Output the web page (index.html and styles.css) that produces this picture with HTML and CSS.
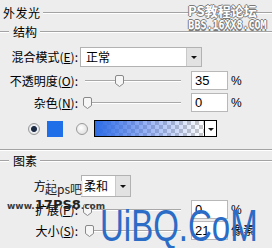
FILE: index.html
```html
<!DOCTYPE html>
<html lang="zh-CN">
<head>
  <meta charset="UTF-8" />
  <meta name="viewport" content="width=device-width, initial-scale=1.0" />
  <title>外发光</title>
  <link rel="stylesheet" href="styles.css">
</head>
<body>
  <div class="legend top"><span>外发光</span></div>
  <div class="legend sub"><span>结构</span></div>

  <div class="row r1">
    <span class="lbl">混合模式(<u>E</u>):</span>
    <div class="select blend"><span>正常</span><i class="drop"></i></div>
  </div>

  <div class="row r2">
    <span class="lbl">不透明度(<u>O</u>):</span>
    <div class="slider"><div class="rail"><i class="thumb" style="left:35%"></i></div></div>
    <div class="num">35</div>
    <span class="unit">%</span>
  </div>

  <div class="row r3">
    <span class="lbl">杂色(<u>N</u>):</span>
    <div class="slider"><div class="rail"><i class="thumb" style="left:0%"></i></div></div>
    <div class="num">0</div>
    <span class="unit">%</span>
  </div>

  <div class="row r4">
    <i class="radio on"></i>
    <i class="swatch"></i>
    <i class="radio"></i>
    <div class="gradient"></div>
    <i class="grad-drop"></i>
  </div>

  <div class="sep"></div>
  <div class="legend sub s2"><span>图素</span></div>

  <div class="row r5">
    <span class="lbl">方法(<u>Q</u>):</span>
    <div class="select method"><span>柔和</span><i class="drop"></i></div>
  </div>

  <div class="row r6">
    <span class="lbl">扩展(<u>P</u>):</span>
    <div class="slider"><div class="rail"><i class="thumb" style="left:0%"></i></div></div>
    <div class="num">0</div>
    <span class="unit">%</span>
  </div>

  <div class="row r7">
    <span class="lbl">大小(<u>S</u>):</span>
    <div class="slider"><div class="rail"><i class="thumb" style="left:2%"></i></div></div>
    <div class="num">21</div>
    <span class="unit">像素</span>
  </div>

  <!-- watermarks -->
  <div class="wm-ps">
    <div class="wm-ps-title">PS教程论坛</div>
    <div class="wm-ps-url">BBS.16XX8.COM</div>
  </div>
  <div class="wm-qi">起ps吧</div>
  <div class="wm-17">www.<b>17PS8</b>.com</div>
  <div class="wm-uibq">UiBQ.CoM</div>
</body>
</html>
```

FILE: styles.css
```css
body {
  margin: 0;
  width: 272px;
  height: 248px;
  overflow: hidden;
  position: relative;
  background-color: #ededed;
  font-family: "Noto Sans CJK SC", sans-serif;
  font-size: 12px;
  line-height: 14px;
  color: #000;
}

u {
  text-decoration: underline;
  text-underline-offset: 1px;
}

/* group titles with etched lines */
.legend {
  display: flex;
  align-items: center;
}

.legend::after {
  content: "";
  flex: 1;
  border-top: 1px solid #a3a3a3;
  border-bottom: 1px solid #fff;
}

.legend.top {
  height: 25px;
  padding-left: 3px;
}

.legend.top span {
  margin-right: 2px;
  letter-spacing: 0.5px;
}

.legend.sub {
  height: 14px;
}

.legend.sub::before {
  content: "";
  width: 9px;
  border-top: 1px solid #a3a3a3;
  border-bottom: 1px solid #fff;
  margin-right: 4px;
}

.legend.sub span {
  margin-right: 3px;
}

.legend.s2 {
  margin-top: 3px;
}

.sep {
  margin-top: 12px;
  border-top: 1px solid #a3a3a3;
  border-bottom: 1px solid #fff;
}

/* control rows */
.row {
  display: flex;
  align-items: center;
}

.lbl {
  width: 78px;
  flex: none;
  text-align: right;
  white-space: nowrap;
}

.r1 { margin-top: 8px; height: 20px; }
.r2 { margin-top: 4px; height: 19px; }
.r3 { margin-top: 3px; height: 19px; }
.r4 { margin-top: 8px; height: 17px; }
.r5 { margin-top: 7px; height: 22px; }
.r6 { margin-top: 3px; height: 19px; }
.r7 { margin-top: 2px; height: 19px; }

/* dropdowns */
.select {
  display: flex;
  align-self: stretch;
  box-sizing: border-box;
  border: 1px solid #b2b2b2;
  background-color: #fff;
}

.select span {
  flex: 1;
  display: flex;
  align-items: center;
  padding-left: 5px;
}

.select .drop {
  width: 14px;
  background-color: #e2e2e2;
  border-left: 1px solid #c9c9c9;
  position: relative;
}

.select .drop::after,
.grad-drop::after {
  content: "";
  position: absolute;
  left: 50%;
  top: 50%;
  margin: -1px 0 0 -3px;
  border-left: 3px solid transparent;
  border-right: 3px solid transparent;
  border-top: 3px solid #111;
}

.blend {
  margin-left: 2px;
  width: 122px;
}

.method {
  margin-left: 3px;
  width: 50px;
}

.method span {
  padding-left: 2px;
}

/* sliders */
.slider {
  width: 96px;
  height: 12px;
  margin-left: 7px;
  position: relative;
}

.slider::before {
  content: "";
  position: absolute;
  left: 0;
  right: 0;
  top: 5px;
  border-top: 1px solid #a8a8a8;
  border-bottom: 1px solid #fff;
}

.rail {
  position: absolute;
  left: 2px;
  right: 4px;
  top: 0;
  bottom: 0;
}

.thumb {
  position: absolute;
  top: 0;
  width: 9px;
  height: 12px;
  margin-left: -4px;
  background: url("data:image/svg+xml,%3Csvg xmlns='http://www.w3.org/2000/svg' width='9' height='12'%3E%3Cpath d='M2 .5h5a1.5 1.5 0 0 1 1.5 1.5v6.5L4.5 11.5.5 8.5V2A1.5 1.5 0 0 1 2 .5z' fill='%23f6f6f6' stroke='%23888'/%3E%3C/svg%3E") no-repeat;
}

.num {
  align-self: stretch;
  width: 37px;
  margin-left: 10px;
  box-sizing: border-box;
  border: 1px solid #b8b8b8;
  background-color: #fff;
  padding-left: 3px;
  display: flex;
  align-items: center;
  font-family: "Liberation Sans", Arial, sans-serif;
  font-size: 13px;
}

.unit {
  margin-left: 3px;
  font-family: "Liberation Sans", "Noto Sans CJK SC", sans-serif;
  font-size: 12px;
}

/* colour choice row */
.radio {
  width: 12px;
  height: 12px;
  box-sizing: border-box;
  border-radius: 50%;
  border: 1px solid #9a9a9a;
  background: radial-gradient(circle at 40% 40%, #fff, #d6d6d6);
}

.radio.on {
  margin-left: 28px;
  background: radial-gradient(circle, #1c2b44 0 2.5px, #7e8a9a 3px, #eef0f3 3.5px, #d2d2d2);
}

.swatch {
  width: 16px;
  height: 16px;
  margin-left: 7px;
  background-color: #1f6fe8;
}

.swatch + .radio {
  margin-left: 13px;
}

.gradient {
  width: 111px;
  align-self: stretch;
  margin-left: 6px;
  box-sizing: border-box;
  border: 1px solid #000;
  background:
    linear-gradient(to right, #2d6ce6, rgba(60, 110, 235, 0.55) 45%, rgba(255, 255, 255, 0) 100%),
    repeating-conic-gradient(#c8c8c8 0 25%, #fff 0 50%) 0 0 / 8px 8px;
}

.grad-drop {
  width: 12px;
  align-self: stretch;
  box-sizing: border-box;
  border: 1px solid #000;
  border-left: none;
  background-color: #fff;
  position: relative;
}

/* watermarks lying over the dialog */
.wm-ps {
  position: absolute;
  left: 188px;
  top: 3px;
  text-align: right;
  color: #fff;
  text-shadow: 1px 0 #7a7a7a, -1px 0 #7a7a7a, 0 1px #7a7a7a, 0 -1px #7a7a7a;
}

.wm-ps-title {
  font-size: 13px;
  line-height: 15px;
  font-weight: bold;
  padding-right: 10px;
}

.wm-ps-url {
  font-family: "DejaVu Sans Mono", monospace;
  font-size: 10px;
  line-height: 11px;
  font-weight: bold;
  transform: scaleY(1.25);
  transform-origin: top;
}

.wm-qi {
  position: absolute;
  left: 45px;
  top: 181px;
  padding-right: 1px;
  background-color: #ededed;
  color: #222;
  font-size: 12px;
  line-height: 15px;
}

.wm-17 {
  position: absolute;
  left: 7px;
  top: 199px;
  color: #3a3a3a;
  font-family: "DejaVu Sans", sans-serif;
  font-size: 9px;
  line-height: 12px;
  font-weight: bold;
}

.wm-17 b {
  font-size: 13px;
  color: #222;
}

.wm-uibq {
  position: absolute;
  left: 100px;
  top: 203px;
  color: #2a6cc6;
  font-family: "Liberation Sans", Arial, sans-serif;
  font-size: 33px;
  line-height: 33px;
  transform: scaleY(1.36);
  transform-origin: top;
}
```
